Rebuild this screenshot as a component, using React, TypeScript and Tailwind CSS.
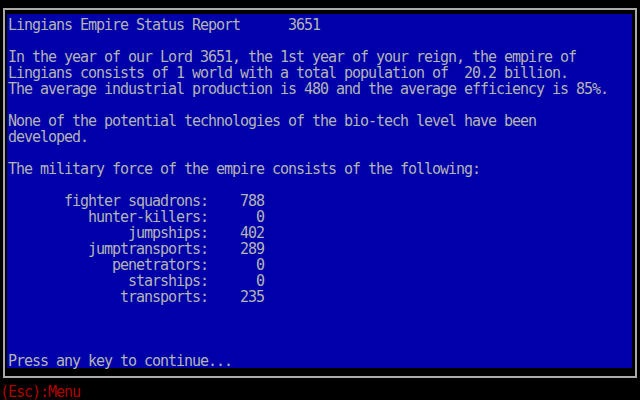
const report = [
  'In the year of our Lord 3651, the 1st year of your reign, the empire of',
  'Lingians consists of 1 world with a total population of  20.2 billion.',
  'The average industrial production is 480 and the average efficiency is 85%.',
]

const tech = [
  'None of the potential technologies of the bio-tech level have been',
  'developed.',
]

const forces: [string, number][] = [
  ['fighter squadrons', 788],
  ['hunter-killers', 0],
  ['jumpships', 402],
  ['jumptransports', 289],
  ['penetrators', 0],
  ['starships', 0],
  ['transports', 235],
]

const Line = ({ text = '' }: { text?: string }) => (
  <div className="h-[16px] leading-[16px] whitespace-pre">{text}</div>
)

export default function App() {
  return (
    <div className="w-[640px] h-[400px] bg-black flex flex-col overflow-hidden font-['DejaVu_Sans_Mono',monospace] text-[15px] tracking-[-1.03px]">
      <div className="ml-[3px] mt-[8px] w-[634px] h-[370px] border-2 border-[#aaaaaa] pt-[4px] pl-[2px] pr-[3px] pb-[8px] flex">
        <div className="flex-1 bg-[#0000aa] text-[#b4b4b4] pt-[3px] pl-[1px] flex flex-col">
          <Line text="Lingians Empire Status Report      3651" />
          <Line />
          {report.map((t) => (
            <Line key={t} text={t} />
          ))}
          <Line />
          {tech.map((t) => (
            <Line key={t} text={t} />
          ))}
          <Line />
          <Line text="The military force of the empire consists of the following:" />
          <Line />
          {forces.map(([name, n]) => (
            <Line key={name} text={(name + ':').padStart(25) + String(n).padStart(7)} />
          ))}
          <div className="mt-auto mb-[-1px]">
            <Line text="Press any key to continue..." />
          </div>
        </div>
      </div>
      <div className="mt-[6px] text-[#b00000]">
        <Line text="(Esc):Menu" />
      </div>
    </div>
  )
}
